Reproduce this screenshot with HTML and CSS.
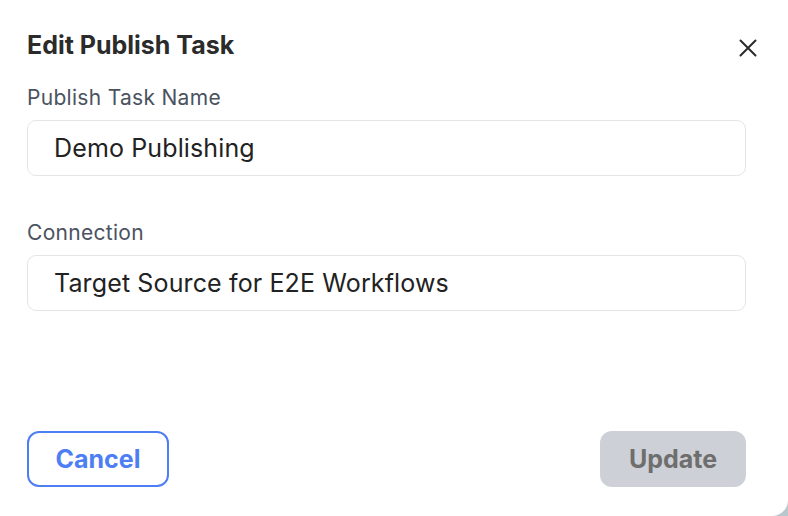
FILE: index.html
```html
<!DOCTYPE html>
<html lang="en">
<head>
<meta charset="utf-8">
<title>Edit Publish Task</title>
<link rel="stylesheet" href="styles.css">
</head>
<body>
<div class="modal">
  <div class="modal-header">
    <h2 class="modal-title">Edit Publish Task</h2>
    <button class="close-btn" aria-label="Close">
      <svg width="18" height="18" viewBox="0 0 18 18" fill="none" stroke="#2b2b2b" stroke-width="2" stroke-linecap="round"><path d="M1.5 1.5 L16.5 16.5 M16.5 1.5 L1.5 16.5"/></svg>
    </button>
  </div>
  <div class="modal-body">
    <div class="field">
      <label class="field-label">Publish Task Name</label>
      <div class="field-input">Demo Publishing</div>
    </div>
    <div class="field">
      <label class="field-label">Connection</label>
      <div class="field-input">Target Source for E2E Workflows</div>
    </div>
  </div>
  <div class="modal-footer">
    <button class="btn btn-cancel">Cancel</button>
    <button class="btn btn-update">Update</button>
  </div>
</div>
</body>
</html>
```
FILE: styles.css
```css
* { box-sizing: border-box; }
html, body { margin: 0; padding: 0; }
body {
  width: 788px;
  height: 516px;
  background: #b9c8cc;
  font-family: Inter, "Noto Sans", sans-serif;
  overflow: hidden;
}
.modal {
  width: 788px;
  height: 516px;
  background: #ffffff;
  border-bottom-right-radius: 16px;
  padding: 30px 42px 29px 27px;
  display: flex;
  flex-direction: column;
}
.modal-header {
  display: flex;
  align-items: center;
  justify-content: space-between;
  margin-right: -11px;
  height: 30px;
}
.modal-title {
  margin: 0;
  font-size: 25px;
  font-weight: 700;
  color: #2b2b2b;
  line-height: 30px;
  letter-spacing: 0;
}
.close-btn {
  border: 0;
  background: none;
  padding: 0;
  width: 18px;
  height: 18px;
  display: flex;
  margin-top: 6px;
}
.modal-body {
  display: flex;
  flex-direction: column;
  gap: 45px;
  margin-top: 26px;
}
.field {
  display: flex;
  flex-direction: column;
  gap: 10px;
}
.field-label {
  font-size: 21px;
  line-height: 24px;
  color: #4b5260;
  letter-spacing: 0.3px;
}
.field-input {
  height: 56px;
  border: 1px solid #e3e5e8;
  border-radius: 9px;
  padding-left: 26px;
  display: flex;
  align-items: center;
  font-size: 25px;
  color: #222222;
  letter-spacing: 0.13px;
}
.modal-footer {
  margin-top: auto;
  display: flex;
  justify-content: space-between;
  margin-bottom: 0;
}
.btn {
  height: 56px;
  border-radius: 12px;
  font-family: Inter, "Noto Sans", sans-serif;
  font-size: 25px;
  font-weight: 700;
}
.btn-cancel {
  width: 142px;
  background: #ffffff;
  border: 2px solid #4e7ef3;
  color: #4e7ef3;
}
.btn-update {
  width: 146px;
  background: #cdd0d6;
  border: 0;
  color: #6e6e6e;
}
```
